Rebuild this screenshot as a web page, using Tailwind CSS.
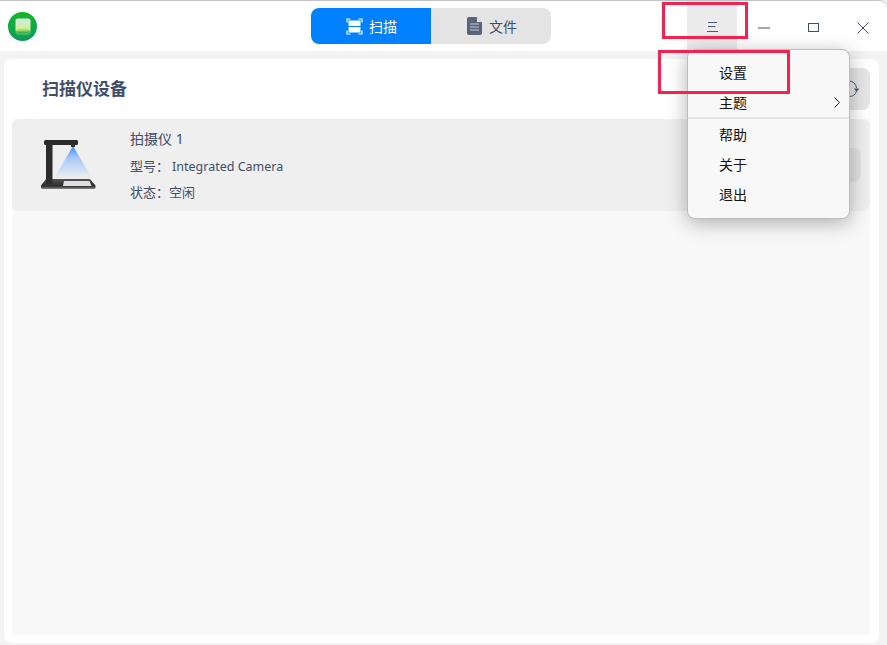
<!DOCTYPE html>
<html lang="zh">
<head>
<meta charset="utf-8">
<script src="https://cdn.jsdelivr.net/npm/@tailwindcss/browser@4"></script>
</head>
<body class="m-0 bg-white">
<div class="relative w-[887px] h-[645px] overflow-hidden bg-[#f3f3f3] font-['Noto_Sans','Noto_Sans_CJK_SC',sans-serif] text-[#414d68]">
  <!-- Title bar -->
  <header class="h-[51px] bg-white border-t border-[#c4c4c4] rounded-tr-lg flex items-center relative">
    <div class="ml-[8px] mt-[1px] w-[29px] h-[29px] rounded-full bg-gradient-to-b from-[#12b81f] to-[#0f9a5c] flex items-center justify-center">
      <svg width="20" height="20" viewBox="0 0 20 20">
        <defs><linearGradient id="a" x1="0" y1="0" x2="0" y2="1"><stop offset="0" stop-color="#d5ecd5"/><stop offset=".5" stop-color="#d0eeb8"/><stop offset=".68" stop-color="#d6ec5c"/><stop offset=".8" stop-color="#3cb55a"/><stop offset="1" stop-color="#25a84a"/></linearGradient></defs>
        <rect x="2.500" y="1.500" width="15" height="17" rx="2" fill="url(#a)"/>
        <rect x="4" y="13" width="12" height="4" rx="1" fill="none" stroke="#5fc878" stroke-width=".7"/>
      </svg>
    </div>
    <div class="absolute left-[311px] top-[7px] w-[240px] h-[36px] rounded-lg overflow-hidden flex text-[14px]">
      <div class="w-[120px] bg-[#0081ff] text-white flex items-center justify-center gap-[6px] pl-[1px]">
        <svg width="17" height="17" viewBox="0 0 17 17" fill="none" stroke="#fff" stroke-width="1.2">
          <path d="M1 4.500V1H4.500M12.500 1H16V4.500M16 12.500V16H12.500M4.500 16H1V12.500"/>
          <rect x="2.500" y="2.500" width="12" height="12" fill="#fff" stroke="none"/>
          <path d="M0 8.500H17" stroke="#0081ff" stroke-width="1.2"/>
        </svg>
        <span>扫描</span>
      </div>
      <div class="w-[120px] bg-[#e4e4e4] flex items-center justify-center gap-[7px] pl-[2px] text-[#414d68]">
        <svg width="15" height="18" viewBox="0 0 15 18">
          <path d="M2 0H9.500L15 5.500V16a2 2 0 0 1-2 2H2a2 2 0 0 1-2-2V2a2 2 0 0 1 2-2Z" fill="#5a6478"/>
          <path d="M10 0.500V5H14.500Z" fill="#e4e4e4"/>
          <path d="M3 7H12M3 10H12M3 13H12" stroke="#c5cad3" stroke-width="1"/>
        </svg>
        <span>文件</span>
      </div>
    </div>
    <div class="absolute left-[687px] top-0 h-[49px] flex">
      <div class="w-[50px] bg-[#ececec] flex items-center justify-center pl-[2px] pt-[2px]">
        <svg width="12" height="12" viewBox="0 0 12 12" stroke="#4b5a78" stroke-width="1" fill="none"><path d="M1 1.500H10M1 5.500H8.500M0 10.500H11"/></svg>
      </div>
      <div class="w-[50px] flex items-center justify-center pl-[4px] pt-[4px]">
        <svg width="12" height="2" viewBox="0 0 12 2"><path d="M0 1H12" stroke="#414d68"/></svg>
      </div>
      <div class="w-[50px] flex items-center justify-center pl-[4px] pt-[4px]">
        <svg width="12" height="10" viewBox="0 0 12 10" fill="none"><rect x=".5" y=".5" width="10" height="8" stroke="#414d68"/></svg>
      </div>
      <div class="w-[50px] flex items-center justify-center pl-[1px] pt-[4px]">
        <svg width="12" height="12" viewBox="0 0 12 12" fill="none"><path d="M.5.5L11.500 11.500M11.500.5L.5 11.500" stroke="#414d68"/></svg>
      </div>
    </div>
  </header>

  <!-- Main panel -->
  <main class="mx-[4px] mt-[8px] w-[875px] h-[584px] bg-white rounded-lg px-[8px] pb-[8px] flex flex-col">
    <div class="h-[60px] flex items-center justify-between shrink-0">
      <h1 class="ml-[30px] text-[17px] font-bold text-[#414d68]">扫描仪设备</h1>
      <div class="mr-[1px] mt-[-1px] w-[42px] h-[42px] rounded-lg bg-[#e6e6e6] flex items-center justify-center">
        <svg width="20" height="20" viewBox="0 0 20 20" fill="none"><path d="M10 2A7.500 7.500 0 0 1 17.500 9M17.500 12A7.500 7.500 0 0 1 10 17.500A7.500 7.500 0 0 1 2.500 10A7.500 7.500 0 0 1 10 2" stroke="#4b5a78"/><path d="M15 9.500H20.500L17.500 13Z" fill="#4b5a78"/></svg>
      </div>
    </div>
    <div class="mr-[1px] flex-1 bg-[#f8f8f8]">
      <div class="h-[92px] rounded-lg bg-[#efefef] flex items-center relative">
        <svg class="ml-[28px] shrink-0" width="56" height="52" viewBox="0 0 56 52">
          <defs>
            <linearGradient id="b" x1="0" y1="0" x2="0" y2="1"><stop offset="0" stop-color="#3f8cf8"/><stop offset=".35" stop-color="#a6c8f6"/><stop offset=".75" stop-color="#d5e2f4"/><stop offset="1" stop-color="#efefef" stop-opacity=".2"/></linearGradient>
            <linearGradient id="c" x1="0" y1="0" x2="0" y2="1"><stop offset="0" stop-color="#555"/><stop offset=".7" stop-color="#2c2c2c"/><stop offset="1" stop-color="#888"/></linearGradient>
          </defs>
          <path d="M33 7L13 41H53Z" fill="url(#b)"/>
          <path d="M6 40H50L55.500 46.500V48.500a1.500 1.500 0 0 1-1.500 1.500H2.500a1.500 1.500 0 0 1-1.500-1.500V46.500Z" fill="url(#c)"/>
          <path d="M24 42H49.500L51.500 47H23Z" fill="#dedede"/>
          <rect x="6" y="4" width="6.500" height="41" rx="1.500" fill="#2c2c2c"/>
          <rect x="4" y="1" width="34" height="5" rx="1.500" fill="#2c2c2c"/>
          <rect x="31" y="5" width="4" height="3" fill="#333"/>
        </svg>
        <div class="ml-[34px] flex flex-col text-[13px] leading-[26px]">
          <div class="text-[14px]">拍摄仪 1</div>
          <div class="pt-[1px]">型号：<span class="ml-[3px] text-[12.5px]">Integrated Camera</span></div>
          <div class="mt-[-1px]">状态：空闲</div>
        </div>
        <div class="absolute right-[9px] top-[29px] w-[40px] h-[34px] rounded-lg bg-[#e2e2e2]"></div>
      </div>
    </div>
  </main>

  <!-- Dropdown menu -->
  <div class="absolute left-[687px] top-[49px] w-[163px] h-[170px] rounded-lg bg-[#f8f8f8] border border-[#bdbdbd] shadow-[0_4px_20px_rgba(0,0,0,0.3)] text-[14px] text-[#111] py-[7px]">
    <div class="h-[30px] pl-[31px] flex items-center">设置</div>
    <div class="h-[30px] pl-[31px] pr-[9px] flex items-center justify-between">
      <span>主题</span>
      <svg width="6" height="11" viewBox="0 0 6 11" fill="none"><path d="M.5.5L5.500 5.500L.5 10.500" stroke="#222"/></svg>
    </div>
    <div class="h-[2px] bg-[#e6e6e6]"></div>
    <div class="h-[30px] pl-[31px] flex items-center">帮助</div>
    <div class="h-[30px] pl-[31px] flex items-center">关于</div>
    <div class="h-[30px] pl-[31px] flex items-center">退出</div>
  </div>

  <!-- Annotation rectangles -->
  <div class="absolute left-[662px] top-[2px] w-[86px] h-[37px] border-[3px] border-[#f5214e]"></div>
  <div class="absolute left-[658px] top-[50px] w-[132px] h-[44px] border-[3px] border-[#f5214e]"></div>
</div>
</body>
</html>
